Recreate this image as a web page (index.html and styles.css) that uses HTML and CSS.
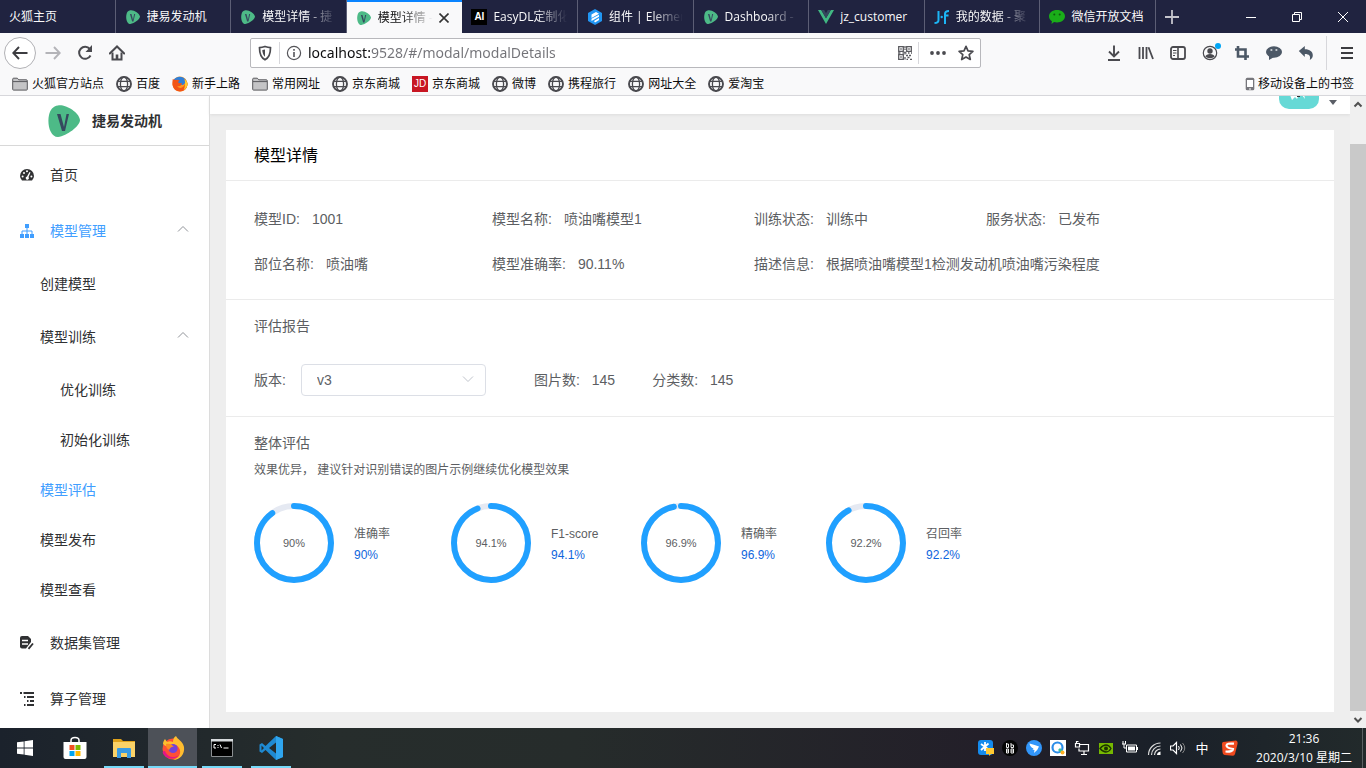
FILE: index.html
```html
<!DOCTYPE html>
<html lang="zh-CN">
<head>
<meta charset="utf-8">
<meta name="viewport" content="width=device-width, initial-scale=1">
<title>模型详情 - 捷易发动机</title>
<link rel="stylesheet" href="styles.css">
</head>
<body>
<svg class="sprite" aria-hidden="true">
  <symbol id="leaf" viewBox="0 0 32 32"><path d="M10 .5C17-1 31 7 32 15c0 6-13 16-22 17C2 32-1 19 1 10 2 5 5 1 10 .5z" fill="#4dba87"/><path d="M9 9h3.500l3.500 13 2.500-13H21l-4 17h-3z" fill="#35495e"/></symbol>
  <symbol id="globe" viewBox="0 0 16 16"><g fill="none" stroke="#4a4a4f" stroke-width="1.3"><circle cx="8" cy="8" r="7" stroke-width="1.9"/><ellipse cx="8" cy="8" rx="3.6" ry="7"/><path d="M1.5 5.3h13M1.5 10.7h13"/></g></symbol>
  <symbol id="folder" viewBox="0 0 16 16"><path d="M.7 13.3V3.2q0-1 1-1h3.600l1.500 1.600h7.500q1 0 1 1v8.500q0 .8-.8.8H1.500q-.8 0-.8-.8z" fill="#c4c4c6" stroke="#58585c"/><path d="M1 5.600h14" stroke="#58585c"/></symbol>
  <symbol id="fox" viewBox="0 0 24 24"><circle cx="12" cy="13" r="10.5" fill="#ff4f37"/><path d="M2 8c0-2 1-4 2-5l2 3c2-1 4-1 6 0 0-3 1-5 3-6 1 3 7 5 8 11 1 7-4 13-11 13 6-2 9-7 6-12-2-4-7-4-9-2-3 1-5 0-7-2z" fill="#ffbd2f"/><path d="M4 15c2 6 9 8 14 4-2 4-10 5-14 1s-2-5 0-5z" fill="#e31587"/><circle cx="12" cy="12.5" r="4.6" fill="#7543d9"/><path d="M5 8c3-1 6 0 8 3-2-1-4 1-5 3-2-1-3-3-3-6z" fill="#ff8a20"/></symbol>
  <symbol id="old-fox" viewBox="0 0 16 16"><circle cx="8" cy="8" r="7.500" fill="#ff9a1f"/><path d="M1 5Q3 1 7 .7q6 0 7.500 5L11 9 4 8z" fill="#2f7fd8"/><path d="M.8 3Q2 4 4 4q2-.5 3.500.5L6 6q1 2 4 1-1 4-5 3 3 4 7 0 2-3 .5-7Q16 6 15.500 9q-1.500 6.500-7.500 6.500T.5 9Q.3 5 .8 3z" fill="#f25516"/><path d="M12.500 3Q16 6 15.500 9q-1 4-4 5.500Q14 9 12.500 3z" fill="#ffcb2f"/></symbol>
  <symbol id="up" viewBox="0 0 12 12"><path d="M1 8.500l5-5 5 5" fill="none" stroke="currentColor"/></symbol>
</svg>

<header class="browser">
  <div class="tabbar">
    <nav class="tabs" aria-label="标签页">
      <a class="tab" href="#"><span class="tab-label">火狐主页</span></a>
      <a class="tab" href="#"><svg class="leaf-icon"><use href="#leaf"/></svg><span class="tab-label">捷易发动机</span></a>
      <a class="tab" href="#"><svg class="leaf-icon"><use href="#leaf"/></svg><span class="tab-label fade">模型详情 - 捷</span></a>
      <a class="tab active" href="#"><svg class="leaf-icon"><use href="#leaf"/></svg><span class="tab-label fade">模型详情 -</span><svg class="close" viewBox="0 0 10 10"><path d="M.5.5l9 9M9.500.5l-9 9" stroke="#333" stroke-width="1.600"/></svg></a>
      <a class="tab" href="#"><span class="ai-icon">AI</span><span class="tab-label fade">EasyDL定制化</span></a>
      <a class="tab" href="#"><svg class="icon16" viewBox="0 0 16 16"><path d="M8 0l7 4v8l-7 4-7-4V4z" fill="#2196f3"/><path d="M4.500 5.600L9 3l3 1.700L4.500 9zM4.500 9.700l7.500-4v2L4.500 12zM7 12l5-3v2l-4 2.500z" fill="#fff"/></svg><span class="tab-label fade">组件 | Elemer</span></a>
      <a class="tab" href="#"><svg class="leaf-icon"><use href="#leaf"/></svg><span class="tab-label fade">Dashboard -</span></a>
      <a class="tab" href="#"><svg class="icon16" viewBox="0 0 16 16"><path d="M0 1h3.200L8 9.300 12.800 1H16L8 15z" fill="#41b883"/><path d="M3.200 1h3L8 4.200 9.800 1h3L8 9.300z" fill="#35495e"/></svg><span class="tab-label">jz_customer</span></a>
      <a class="tab" href="#"><svg class="icon16" viewBox="0 0 16 16"><path d="M4.500 2v9q0 3-4 3M11 15V5q0-3 4-3M10 6.500h4.500" fill="none" stroke="#1cb5f5" stroke-width="2"/><circle cx="7.700" cy="8" r="1.200" fill="#1cb5f5"/></svg><span class="tab-label fade">我的数据 - 聚</span></a>
      <a class="tab" href="#"><svg class="icon16" viewBox="0 0 16 16"><path d="M8 1c4.500 0 8 2.700 8 6.300s-3.500 6.200-8 6.200q-1.500 0-3-.4L2.500 15l.4-2.800C1 11 0 9.300 0 7.300 0 3.700 3.500 1 8 1z" fill="#1aad19"/><circle cx="5.300" cy="5.500" r="1" fill="#0c5c0c"/><circle cx="10.700" cy="5.500" r="1" fill="#0c5c0c"/></svg><span class="tab-label">微信开放文档</span></a>
    </nav>
    <button class="new-tab" aria-label="新建标签页"><svg viewBox="0 0 14 14"><path d="M7 0v14M0 7h14" stroke="#c4c4cc" stroke-width="1.800"/></svg></button>
    <div class="win-buttons">
      <button aria-label="最小化"><svg viewBox="0 0 10 10"><path d="M0 5.500h10" stroke="#fff"/></svg></button>
      <button aria-label="还原"><svg viewBox="0 0 10 10"><path d="M.5 2.500h7v7h-7zM2.500 2V.5h7v7H8" fill="none" stroke="#fff"/></svg></button>
      <button aria-label="关闭"><svg viewBox="0 0 10 10"><path d="M0 0l10 10M10 0L0 10" stroke="#fff"/></svg></button>
    </div>
  </div>

  <div class="toolbar">
    <div class="tools">
      <button class="back" aria-label="后退"><svg class="icon16" viewBox="0 0 16 16"><path d="M15.500 8H1.500M7 2L1.300 8 7 14" fill="none" stroke="#3c3c40" stroke-width="1.900"/></svg></button>
      <button aria-label="前进"><svg class="icon16" viewBox="0 0 16 16"><path d="M.5 8h14M9 2l5.700 6L9 14" fill="none" stroke="#b4b4b8" stroke-width="1.900"/></svg></button>
      <button aria-label="刷新"><svg class="icon16" viewBox="0 0 16 16"><path d="M13.500 10.500A6 6 0 1 1 12.800 4" fill="none" stroke="#4a4a4f" stroke-width="2"/><path d="M15 0v7H8.500z" fill="#4a4a4f"/></svg></button>
      <button aria-label="主页"><svg class="icon16" viewBox="0 0 16 16"><path d="M.8 8.500L8 1.500l7.200 7" fill="none" stroke="#4a4a4f" stroke-width="2" stroke-linecap="round"/><path d="M3.500 7.500v7h9v-7" fill="none" stroke="#4a4a4f" stroke-width="2"/><path d="M6.700 9.500h2.600v5H6.700z" fill="#4a4a4f"/></svg></button>
    </div>
    <div class="urlbar">
      <svg class="icon16" viewBox="0 0 16 16"><path d="M8 1.500q3 1 5.500 1.200 0 9.300-5.500 12Q2.500 12 2.500 2.700 5 2.500 8 1.500z" fill="none" stroke="#4a4a4f" stroke-width="1.700"/><path d="M8 4.500v7.300q-2.500-2-2.700-6.700z" fill="#4a4a4f"/></svg>
      <i class="sep"></i>
      <svg class="icon16 info-icon" viewBox="0 0 16 16"><circle cx="8" cy="8" r="6.600" fill="none" stroke="#55555a" stroke-width="1.200"/><path d="M8 7v5M8 4v1.700" stroke="#55555a" stroke-width="1.600"/></svg>
      <input class="url" type="text" aria-label="地址" value="localhost:9528/#/modal/modalDetails">
      <svg class="icon14" viewBox="0 0 14 14"><g fill="none" stroke="#5a5a5f" stroke-width="1.300"><path d="M.7.7h4.600v4.600H.7zM8.700.7h4.600v4.600H8.700zM.7 8.700h4.600v4.600H.7z"/><path d="M2.300 3h1.400M10.300 3h1.400M2.300 11h1.400M7 0v4M7 5.500v3M0 7h3M4.500 7h4M10 7h1.500M13 7h1M8 9.500h2M11 9.500h2M9.500 11.500h2M7 11v3M12 13.300h2M8.500 13.300h1.500" stroke-dasharray="2 .6"/></g></svg>
      <i class="sep"></i>
      <svg class="icon16 dots" viewBox="0 0 16 16" fill="#4a4a4f"><circle cx="2" cy="8" r="1.900"/><circle cx="8" cy="8" r="1.900"/><circle cx="14" cy="8" r="1.900"/></svg>
      <svg class="icon16" viewBox="0 0 16 16"><path d="M8 1.300l2 4.500 4.900.5-3.700 3.300 1.100 4.900L8 12l-4.300 2.500 1.100-4.900L1.100 6.300 6 5.800z" fill="none" stroke="#4a4a4f" stroke-width="1.700" stroke-linejoin="round"/></svg>
    </div>
    <div class="tools">
      <button aria-label="下载"><svg class="icon16" viewBox="0 0 16 16"><path d="M8 .5v11M3 6.500l5 5 5-5M2 15h12" fill="none" stroke="#4a4a4f" stroke-width="1.900"/></svg></button>
      <button aria-label="我的足迹"><svg class="icon16" viewBox="0 0 16 16"><path d="M1.500 2v12M5 2v12M8.500 2v12M10.500 2.300L15 14" stroke="#4a4a4f" stroke-width="1.800"/></svg></button>
      <button aria-label="侧栏"><svg class="icon16" viewBox="0 0 16 16"><rect x="1" y="2" width="14" height="12" rx="2" fill="none" stroke="#4a4a4f" stroke-width="1.800"/><path d="M8 2v12" stroke="#4a4a4f" stroke-width="1.600"/><path d="M3 5.500h3.500M3 8h3.500M3 10.500h2" stroke="#4a4a4f"/></svg></button>
      <button class="account" aria-label="账户"><svg class="icon16" viewBox="0 0 16 16"><circle cx="8" cy="8" r="6.700" fill="none" stroke="#4a4a4f" stroke-width="1.200"/><circle cx="8" cy="6" r="2.700" fill="#4a4a4f"/><path d="M3.300 11.500q1-2.500 4.700-2.500t4.700 2.500Q11 13.300 8 13.300t-4.700-1.800z" fill="#4a4a4f"/></svg></button>
      <button aria-label="截图"><svg class="icon16" viewBox="0 0 16 16"><path d="M4 1v10.500h11M1 4.500h10.500V15" fill="none" stroke="#4c5866" stroke-width="2.600"/></svg></button>
      <button aria-label="消息"><svg class="icon16" viewBox="0 0 16 16"><ellipse cx="8" cy="7" rx="8" ry="5.700" fill="#4c5866"/><path d="M3 10v5l5-3z" fill="#4c5866"/><path d="M4.500 5h1.800M9.500 5h1.800" stroke="#e8eaee" stroke-width="1.500"/></svg></button>
      <button aria-label="撤销"><svg class="icon16" viewBox="0 0 16 16"><path d="M.8 6l6-5v3.300c5 0 8 2.500 8 6 0 2-1 3.500-3 4.700 1-4-.5-6-5-6V12z" fill="#4c5866"/></svg></button>
      <i class="sep tall"></i>
      <button aria-label="菜单"><svg class="icon16" viewBox="0 0 16 16"><path d="M2 3h12M2 8h12M2 13h12" stroke="#3c3c40" stroke-width="2"/></svg></button>
    </div>
  </div>

  <nav class="bookmarks" aria-label="书签">
    <a href="#"><svg class="icon16"><use href="#folder"/></svg>火狐官方站点</a>
    <a href="#"><svg class="icon16"><use href="#globe"/></svg>百度</a>
    <a href="#"><svg class="icon16"><use href="#old-fox"/></svg>新手上路</a>
    <a href="#"><svg class="icon16"><use href="#folder"/></svg>常用网址</a>
    <a href="#"><svg class="icon16"><use href="#globe"/></svg>京东商城</a>
    <a href="#"><span class="jd-icon">JD</span>京东商城</a>
    <a href="#"><svg class="icon16"><use href="#globe"/></svg>微博</a>
    <a href="#"><svg class="icon16"><use href="#globe"/></svg>携程旅行</a>
    <a href="#"><svg class="icon16"><use href="#globe"/></svg>网址大全</a>
    <a href="#"><svg class="icon16"><use href="#globe"/></svg>爱淘宝</a>
    <a class="mobile" href="#"><svg class="phone" viewBox="0 0 10 14"><rect x=".7" y=".7" width="8.600" height="12.600" rx="1.500" fill="#77777c"/><path d="M2 3h6v7H2z" fill="#fff"/><path d="M4 12h2" stroke="#fff"/></svg>移动设备上的书签</a>
  </nav>
</header>

<div class="page">
  <aside class="sidebar">
    <div class="brand"><svg class="brand-logo"><use href="#leaf"/></svg><strong>捷易发动机</strong></div>
    <nav class="menu">
      <a class="item" href="#"><svg class="menu-icon" viewBox="0 0 14 14"><path d="M2 12.500Q0 10.500 0 8a7 7 0 0 1 14 0q0 2.500-2 4.500z" fill="#303133"/><g fill="#fff"><circle cx="2.600" cy="8.500" r="1"/><circle cx="4" cy="5" r="1"/><circle cx="7" cy="3.300" r="1"/><circle cx="11.400" cy="8.500" r="1"/><path d="M9.500 4l1 .5-2 4.500a1.600 1.600 0 1 1-1.500-.5z"/></g></svg>首页</a>
      <a class="item on" href="#"><svg class="menu-icon" viewBox="0 0 14 14"><path d="M5 0h4v4H5zM0 10h4v4H0zM5 10h4v4H5zM10 10h4v4h-4z" fill="#409eff"/><path d="M7 4v6M2 10V7h10v3" fill="none" stroke="#409eff"/></svg>模型管理<svg class="arrow"><use href="#up"/></svg></a>
      <a class="item sub" href="#">创建模型</a>
      <a class="item group" href="#">模型训练<svg class="arrow"><use href="#up"/></svg></a>
      <a class="item deep" href="#">优化训练</a>
      <a class="item deep" href="#">初始化训练</a>
      <a class="item sub on" href="#">模型评估</a>
      <a class="item sub" href="#">模型发布</a>
      <a class="item sub" href="#">模型查看</a>
      <a class="item" href="#"><svg class="menu-icon" viewBox="0 0 14 14"><path d="M0 2q0-2 2-2h6l3 3v3l-5 6.500H2q-2 0-2-2z" fill="#303133"/><path d="M2 4.500h6M2 8h6" stroke="#fff" stroke-width="1.300"/><path d="M8.500 12.800L13 7.500" stroke="#303133" stroke-width="1.800"/></svg>数据集管理</a>
      <a class="item" href="#"><svg class="menu-icon" viewBox="0 0 14 14"><path d="M0 1h2M3.500 1H14M4 5h1.500M7 5h7M7 9h1.500M10 9h4M4 13h1.500M7 13h7" stroke="#303133" stroke-width="1.800"/></svg>算子管理</a>
    </nav>
  </aside>

  <main class="main">
    <div class="navbar"><span class="avatar"><svg viewBox="0 0 40 40"><rect width="40" height="40" fill="#66d9d6"/><path d="M11 26l2 5 3-3 2 2 2-4zM23 26l3 4-1-5z" fill="#fff"/><path d="M18 27h3" stroke="#333" stroke-width="2"/></svg></span><span class="caret"></span></div>
    <article class="card">
      <h1 class="card-title">模型详情</h1>
      <section class="section info">
        <div class="field"><span>模型ID:</span><span>1001</span></div>
        <div class="field"><span>模型名称:</span><span>喷油嘴模型1</span></div>
        <div class="field"><span>训练状态:</span><span>训练中</span></div>
        <div class="field"><span>服务状态:</span><span>已发布</span></div>
        <div class="field"><span>部位名称:</span><span>喷油嘴</span></div>
        <div class="field"><span>模型准确率:</span><span>90.11%</span></div>
        <div class="field wide"><span>描述信息:</span><span>根据喷油嘴模型1检测发动机喷油嘴污染程度</span></div>
      </section>
      <section class="section report">
        <h2>评估报告</h2>
        <div class="report-row">
          <label for="version">版本:</label>
          <div class="select"><select id="version"><option>v3</option></select><svg class="arrow down"><use href="#up"/></svg></div>
          <div class="counts">
            <div class="field"><span>图片数:</span><span>145</span></div>
            <div class="field"><span>分类数:</span><span>145</span></div>
          </div>
        </div>
      </section>
      <section class="section overall">
        <h2>整体评估</h2>
        <p>效果优异， 建议针对识别错误的图片示例继续优化模型效果</p>
        <div class="metrics">
          <div class="metric"><div class="ring"><svg viewBox="0 0 80 80"><circle class="track" cx="40" cy="40" r="37"/><circle class="bar" cx="40" cy="40" r="37" pathLength="100" stroke-dasharray="90 100"/></svg><span>90%</span></div><div class="legend"><span>准确率</span><b>90%</b></div></div>
          <div class="metric"><div class="ring"><svg viewBox="0 0 80 80"><circle class="track" cx="40" cy="40" r="37"/><circle class="bar" cx="40" cy="40" r="37" pathLength="100" stroke-dasharray="94.1 100"/></svg><span>94.1%</span></div><div class="legend"><span>F1-score</span><b>94.1%</b></div></div>
          <div class="metric"><div class="ring"><svg viewBox="0 0 80 80"><circle class="track" cx="40" cy="40" r="37"/><circle class="bar" cx="40" cy="40" r="37" pathLength="100" stroke-dasharray="96.9 100"/></svg><span>96.9%</span></div><div class="legend"><span>精确率</span><b>96.9%</b></div></div>
          <div class="metric"><div class="ring"><svg viewBox="0 0 80 80"><circle class="track" cx="40" cy="40" r="37"/><circle class="bar" cx="40" cy="40" r="37" pathLength="100" stroke-dasharray="92.2 100"/></svg><span>92.2%</span></div><div class="legend"><span>召回率</span><b>92.2%</b></div></div>
        </div>
      </section>
    </article>
  </main>

  <div class="scrollbar" aria-hidden="true">
    <svg class="scroll-arrow" viewBox="0 0 16 17"><path d="M4.500 10.500L8 7l3.500 3.500" fill="none" stroke="#505050" stroke-width="2"/></svg>
    <div class="scroll-track"><div class="thumb"></div></div>
    <svg class="scroll-arrow" viewBox="0 0 16 17"><path d="M4.500 7L8 10.500 11.500 7" fill="none" stroke="#505050" stroke-width="2"/></svg>
  </div>
</div>

<footer class="taskbar">
  <div class="apps">
    <button aria-label="开始"><svg class="icon16" viewBox="0 0 16 16"><path d="M0 2.300L6.700 1.400v6.200H0zM7.500 1.300L16 0v7.600H7.500zM0 8.400h6.700v6.200L0 13.700zM7.500 8.400H16V16l-8.500-1.200z" fill="#fff"/></svg></button>
    <button aria-label="应用商店"><svg class="icon24" viewBox="0 0 24 24"><path d="M8 7V4.500q0-3 4-3t4 3V7" fill="none" stroke="#fff" stroke-width="1.500"/><path d="M.5 6h23v15q0 2-2 2h-19q-2 0-2-2z" fill="#fff"/><path d="M6.500 9h5v5h-5z" fill="#f25022"/><path d="M12.500 9h5v5h-5z" fill="#7fba00"/><path d="M6.500 15h5v5h-5z" fill="#00a4ef"/><path d="M12.500 15h5v5h-5z" fill="#ffb900"/></svg></button>
    <button class="running" aria-label="文件资源管理器"><svg class="icon24" viewBox="0 0 24 24"><path d="M1 3h8l2 2h12v4H1z" fill="#e0a21b"/><path d="M1 6h22v15H1z" fill="#fbd267"/><path d="M5 22v-9q0-1 1-1h12q1 0 1 1v9h-4v-5H9v5z" fill="#3a9be3"/></svg></button>
    <button class="running current" aria-label="Firefox"><svg class="icon24"><use href="#fox"/></svg></button>
    <button class="running" aria-label="命令提示符"><svg class="icon24" viewBox="0 0 24 24"><path d="M1.500 3.500h21v17h-21z" fill="#000" stroke="#8b8f92"/><path d="M1 3h22v2.500H1z" fill="#d6dadd"/><path d="M6 8.500H4v3.500h2M8 9v1M8 11v1M10 8.500l1.500 3.500M13.500 12h5" fill="none" stroke="#fff"/></svg></button>
    <button class="running" aria-label="Visual Studio Code"><svg class="icon24" viewBox="0 0 24 24"><path d="M17 0l7 3v18l-7 3L6.500 14 3 17l-2.500-1.500v-7L3 7l3.500 3zM17 6.500L10 12l7 5.500zM2.500 9.500v5L5 12z" fill="#1f8ad2" fill-rule="evenodd"/><path d="M17 0l7 3v18l-7 3z" fill="#2fa5ee"/></svg></button>
  </div>
  <div class="tray">
    <svg class="icon16" viewBox="0 0 16 16"><rect width="15" height="15" rx="3" fill="#148bee"/><path d="M7 2v9M3 4l7 5M10.500 3.500L3 10" stroke="#fff" stroke-width="1.800"/><path d="M8 8h8v6h-3l-2 2v-2H8z" fill="#ffc832"/></svg>
    <svg class="icon16" viewBox="0 0 16 16"><circle cx="8" cy="8" r="8" fill="#050505"/><g fill="none" stroke="#eee"><path d="M4.500 3v4.500M4.500 4h2v3.500h-2M9 3v4.500h2.500V5H9M4.500 9v4h2v-4h-2M4.500 11h2M9 9h2.500v4H9zM9 11h2.500"/></g></svg>
    <svg class="icon16" viewBox="0 0 16 16"><circle cx="8" cy="8" r="8" fill="#3296fa"/><path d="M3.500 3.500Q9 5 13 6.500 12 10 8 13l.5-3-2-.5 1-1Q4 7 3.500 3.500z" fill="#fff"/></svg>
    <svg class="icon16" viewBox="0 0 16 16"><path d="M0 0h16v16H0z" fill="#fff"/><circle cx="7.500" cy="7.500" r="5" fill="none" stroke="#2b8de8" stroke-width="2.200"/><path d="M8 10l2-2 4 4-2 2z" fill="#35c1a0"/><circle cx="12.500" cy="12.500" r="2" fill="#ffb020"/></svg>
    <svg class="icon16" viewBox="0 0 16 16"><path d="M6 4.500h8.500v6.500H5V8.500M10 11v3M7 14.500h6M1.500 3.500h4v3.500h-4zM2.500 3V1.500h2" fill="none" stroke="#fff" stroke-width="1.200"/></svg>
    <svg class="icon16" viewBox="0 0 16 16"><path d="M1 3h14v11H1z" fill="#76b900"/><path d="M2 8.500Q5 5 8 5t5 3.500Q11 12 8 12T2 8.500z" fill="none" stroke="#1d3300" stroke-width="1.300"/><circle cx="8" cy="8.500" r="2" fill="#1d3300"/></svg>
    <svg class="icon16" viewBox="0 0 16 16"><path d="M6 6.500h7v4H6z" fill="#fff"/><path d="M4.500 5h10v7h-10zM15.500 7v3M0 4h4M1 4V1M3.500 4V1M2 4v4h3" fill="none" stroke="#fff"/></svg>
    <svg class="icon16" viewBox="0 0 16 16"><g fill="none" stroke="#ddd" stroke-width="1.200"><path d="M2.500 15A12 12 0 0 1 14.500 3M5.500 15a9 9 0 0 1 9-9M8.500 15a6 6 0 0 1 6-6"/></g><path d="M11 15q0-3 3.500-3.500V15z" fill="#fff"/></svg>
    <svg class="icon16" viewBox="0 0 16 16"><path d="M.5 6H3l3.500-3.500v11L3 10H.5z" fill="none" stroke="#fff" stroke-width="1.200"/><path d="M8.500 6q1.500 2 0 4M10.500 4.500q3 3.500 0 7" fill="none" stroke="#fff"/><path d="M12.500 3q4.500 5 0 10" fill="none" stroke="#888"/></svg>
    <span class="ime">中</span>
    <svg class="icon16 sogou" viewBox="0 0 16 16"><path d="M1 2L14 .5Q16 1 15.500 4L13 14q-.5 1.500-2 1.700L2.500 15Q.5 14.500.5 12L0 4Q0 2.500 1 2z" fill="#f04a1f"/><path d="M12 3.700Q4.500 3 4.500 5.500T11 9q0 3-7.500 2.500" fill="none" stroke="#fff" stroke-width="2.200"/></svg>
    <time class="clock" datetime="2020-03-10T21:36"><span>21:36</span><span>2020/3/10 星期二</span></time>
    <i class="desktop-edge"></i>
  </div>
</footer>
</body>
</html>
```

FILE: styles.css
```css
* { box-sizing: border-box; }

body {
  margin: 0;
  height: 100vh;
  display: flex;
  flex-direction: column;
  overflow: hidden;
  font: 12px/20px "Open Sans", "Noto Sans CJK SC", sans-serif;
  color: #0c0c0d;
}

a { color: inherit; text-decoration: none; }
button { padding: 0; border: 0; background: none; display: flex; align-items: center; justify-content: center; }
svg { display: block; flex: none; }
h1, h2, p { margin: 0; font-weight: 400; }

.sprite { display: none; }
.icon14 { width: 14px; height: 14px; }
.icon16 { width: 16px; height: 16px; }
.icon24 { width: 24px; height: 24px; }

/* Browser chrome */
.browser { flex: none; background: #f9f9fa; border-bottom: 1px solid #d7d7db; }
.tabbar { display: flex; height: 33px; background: #202340; color: #f9f9fa; }
.tabs { flex: 0 1 1156px; min-width: 0; display: grid; grid-template-columns: repeat(10, minmax(0, 1fr)); }
.tab { display: flex; align-items: center; gap: 6px; padding: 0 10px 0 9px; border-right: 1px solid #5c5e75; }
.tab-label { flex: 1; min-width: 0; overflow: hidden; white-space: nowrap; }
.fade { -webkit-mask-image: linear-gradient(to left, transparent, #000 32px); mask-image: linear-gradient(to left, transparent, #000 32px); }
.tab.active { background: #f9f9fa; color: #0c0c0d; border-top: 2px solid #0a84ff; border-right: 0; }
.leaf-icon { width: 14px; height: 14px; margin: 0 1px; }
.close { width: 10px; height: 10px; margin: 0 3px 0 0; }
.ai-icon, .jd-icon { flex: none; width: 16px; height: 16px; font: 700 10px/16px "Liberation Sans", sans-serif; text-align: center; color: #fff; background: #000; }
.jd-icon { background: #c81623; font-weight: 400; }
.new-tab { width: 32px; }
.new-tab svg { width: 14px; height: 14px; }
.win-buttons { margin-left: auto; display: flex; }
.win-buttons button { width: 46px; }
.win-buttons svg { width: 10px; height: 10px; }

.toolbar { display: flex; align-items: center; height: 40px; padding: 0 3px 0 4px; }
.tools { display: flex; align-items: center; }
.tools button { width: 32px; height: 32px; }
.tools .back { border: 1px solid #b1b1b5; border-radius: 50%; background: #fff; margin-right: 1px; }
.account { position: relative; }
.account::after { content: ""; position: absolute; top: 6px; right: 5px; width: 6px; height: 6px; border-radius: 50%; background: #00a5f5; }
.sep { width: 1px; height: 22px; background: #d7d7db; }
.tall { height: 34px; margin: 0 4px; }
.urlbar { flex: 1; min-width: 0; margin: 0 117px; height: 30px; display: flex; align-items: center; gap: 6px; padding: 0 6px; background: #fff; border: 1px solid #b8b8bc; border-radius: 2px; }
.url {
  flex: 1;
  min-width: 0;
  padding: 0;
  border: 0;
  outline: 0;
  font: 14px/20px "Noto Sans", sans-serif;
  color: transparent;
  background: linear-gradient(90deg, #0c0c0d 62px, #737378 62px);
  -webkit-background-clip: text;
  background-clip: text;
}
.dots { margin: 0 6px 0 5px; }

.bookmarks { display: flex; align-items: center; gap: 12px; height: 22px; padding: 0 12px; }
.bookmarks a { display: flex; align-items: center; gap: 4px; white-space: nowrap; }
.bookmarks .mobile { margin-left: auto; gap: 3px; }
.phone { width: 10px; height: 14px; }

/* Page */
.page { flex: 1; min-height: 0; display: flex; font: 14px/20px "Liberation Sans", "Noto Sans CJK SC", sans-serif; background: #eee; }
.sidebar { flex: none; width: 210px; overflow: hidden; background: #fff; border-right: 1px solid #dcdcdc; }
.brand { display: flex; align-items: center; gap: 12px; height: 50px; padding-left: 48px; border-bottom: 1px solid #d8d8d8; color: #303133; }
.brand-logo { width: 32px; height: 32px; }
.menu { padding-top: 1px; color: #303133; }
.item { display: flex; align-items: center; height: 56px; padding: 0 20px; }
.sub, .deep { height: 50px; }
.sub, .group { padding-left: 40px; }
.deep { padding-left: 60px; }
.on { color: #409eff; }
.menu-icon { width: 14px; height: 14px; margin-right: 16px; }
.arrow { width: 12px; height: 12px; margin: 0 0 4px auto; color: #909399; }

.main { flex: 1; min-width: 0; display: flex; flex-direction: column; }
.navbar { flex: none; height: 18px; overflow: hidden; display: flex; align-items: flex-end; justify-content: flex-end; gap: 10px; padding: 0 13px 5px; background: #fff; box-shadow: 0 1px 3px #dcdcdc; }
.avatar { width: 40px; height: 40px; border-radius: 10px; overflow: hidden; }
.caret { border: 4px solid transparent; border-top: 5px solid #5a5e66; }
.card { flex: 1; margin: 16px; background: #fff; color: #5c5e62; }
.card-title { height: 51px; padding: 0 28px; font-size: 16px; line-height: 51px; color: #000; border-bottom: 1px solid #ebebeb; }
.section { padding: 16px 28px 20px; border-bottom: 1px solid #ebebeb; }
.section h2 { font-size: 14px; line-height: 20px; }
.field { display: flex; gap: 12px; white-space: nowrap; }
.info { display: grid; grid-template-columns: 238px 262px 232px auto; row-gap: 25px; padding: 28px 28px 25px; }
.wide { grid-column: span 2; }
.report-row { display: flex; align-items: center; margin-top: 28px; }
.select { position: relative; width: 185px; margin: 0 48px 0 15px; }
.select select { appearance: none; width: 100%; height: 32px; padding: 0 15px; border: 1px solid #dcdfe6; border-radius: 4px; background: #fff; font: inherit; color: #606266; }
.down { position: absolute; right: 12px; top: 9px; transform: rotate(180deg); color: #c0c4cc; }
.counts { display: flex; gap: 37px; }
.overall { border-bottom: 0; }
.overall p { margin-top: 7px; font-size: 12px; }
.metrics { display: grid; grid-template-columns: 197px 190px 185px auto; margin-top: 23px; font-size: 12px; }
.metric { display: flex; align-items: center; gap: 20px; }
.ring { display: grid; width: 80px; height: 80px; }
.ring > * { grid-area: 1 / 1; }
.ring svg { width: 80px; height: 80px; transform: rotate(-90deg); }
.ring circle { fill: none; stroke-width: 6; }
.ring span { place-self: center; font-size: 11px; }
.ring .track { stroke: #e5e9f2; }
.ring .bar { stroke: #20a0ff; stroke-linecap: round; }
.legend { display: grid; gap: 1px; padding-top: 2px; }
.legend b { font-weight: 400; color: #0f66dd; }

.scrollbar { flex: none; width: 16px; display: flex; flex-direction: column; background: #f0f0f0; }
.scroll-arrow { width: 16px; height: 17px; }
.scroll-track { flex: 1; padding-top: 31px; }
.thumb { height: 100%; background: #c9c9c9; }

/* Taskbar */
.taskbar { flex: none; display: flex; justify-content: space-between; height: 40px; color: #fff; background: linear-gradient(90deg, #1b222c, #262d2c 24%, #262c2b 42%, #231f29 72%, #1a2029 85%, #222a2b); }
.apps { display: flex; }
.apps button { width: 49px; }
.apps button:first-child { margin-right: 1px; }
.apps .running { background: linear-gradient(#76d9f8, #76d9f8) bottom / 40px 2px no-repeat; }
.apps .current { background-color: #4d5158; background-size: 100% 2px; }
.tray { display: flex; align-items: center; gap: 8px; }
.ime { width: 16px; font-size: 13px; text-align: center; }
.sogou { margin-left: 4px; }
.clock { display: grid; line-height: 19px; text-align: center; padding: 0 2px 0 10px; white-space: nowrap; }
.desktop-edge { width: 1px; height: 40px; margin-right: 3px; background: #5b6163; }
```
